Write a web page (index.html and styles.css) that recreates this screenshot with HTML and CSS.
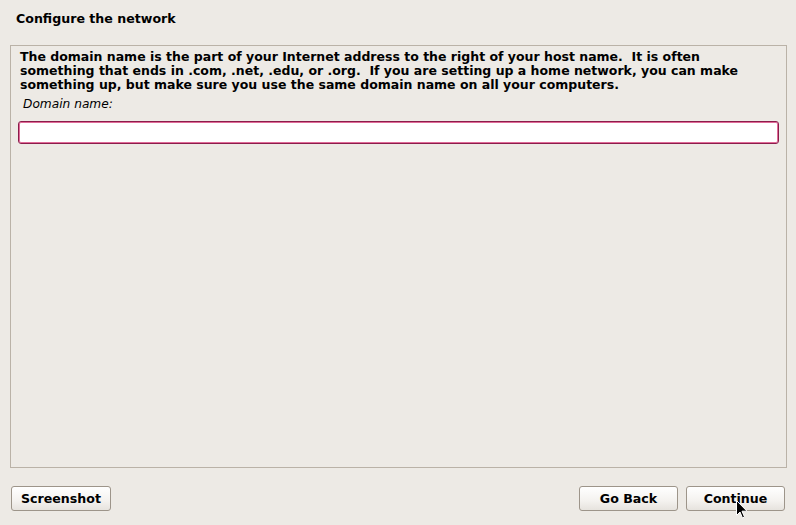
FILE: index.html
```html
<!DOCTYPE html>
<html>
<head>
<meta charset="utf-8">
<link rel="stylesheet" href="styles.css">
</head>
<body>
<div class="app">
  <div class="header">Configure the network</div>
  <div class="panel">
    <p class="desc">The domain name is the part of your Internet address to the right of your host name.&nbsp; It is often something that ends in .com, .net, .edu, or .org.&nbsp; If you are setting up a home network, you can make something up, but make sure you use the same domain name on all your computers.</p>
    <div class="label">Domain name:</div>
    <div class="input"></div>
  </div>
  <div class="footer">
    <button class="btn">Screenshot</button>
    <div class="spacer"></div>
    <button class="btn">Go Back</button>
    <button class="btn">Continue</button>
  </div>
</div>
<svg class="cursor" width="12" height="19" viewBox="0 0 12 19"><path d="M0.5 0.5 L0.5 15.5 L4 12 L6.5 18 L8.5 17 L6 11.2 L11 11.2 Z" fill="#000" stroke="#fff" stroke-width="1"/></svg>
</body>
</html>
```
FILE: styles.css
```css
html, body { margin: 0; padding: 0; }
body {
  width: 796px; height: 525px; overflow: hidden;
  background: #edeae5;
  font-family: "DejaVu Sans", sans-serif;
  font-size: 12px;
  color: #000;
  position: relative;
}
.app { display: flex; flex-direction: column; height: 525px; }
.header {
  height: 45px; box-sizing: border-box;
  padding: 12px 0 0 16px;
  font-weight: bold; font-size: 12.6px; line-height: 14px;
}
.panel {
  margin-left: 10px; width: 777px; height: 423px; box-sizing: border-box;
  border: 1px solid #bab2a7;
  padding: 4px 8px 0 7px;
}
.desc { margin: 0; padding-left: 2px; max-width: 734px; font-weight: bold; font-size: 12.5px; line-height: 14px; }
.label { font-style: italic; font-size: 12.2px; margin: 5px 0 0 5px; line-height: 14px; }
.input {
  margin-top: 10px; height: 23px; width: 761px; box-sizing: border-box;
  background: #fff;
  border: 1px solid #8c1c4b;
  border-radius: 3px;
  box-shadow: inset 0 0 0 1px #e06b98;
}
.footer { display: flex; margin-top: 18px; padding: 0 11px 0 11px; gap: 8px; }
.spacer { flex: 1; }
.btn {
  width: 99px; height: 25px; box-sizing: border-box;
  border: 1px solid #9d958a; border-radius: 3px;
  background: linear-gradient(#ffffff, #f4f2ef 60%, #e6e3de);
  font-family: "DejaVu Sans", sans-serif; font-weight: bold; font-size: 12.6px;
  color: #000; padding: 0; line-height: 22px;
}
.btn:first-child { width: 100px; }
.cursor { position: absolute; left: 736px; top: 500px; }
```
